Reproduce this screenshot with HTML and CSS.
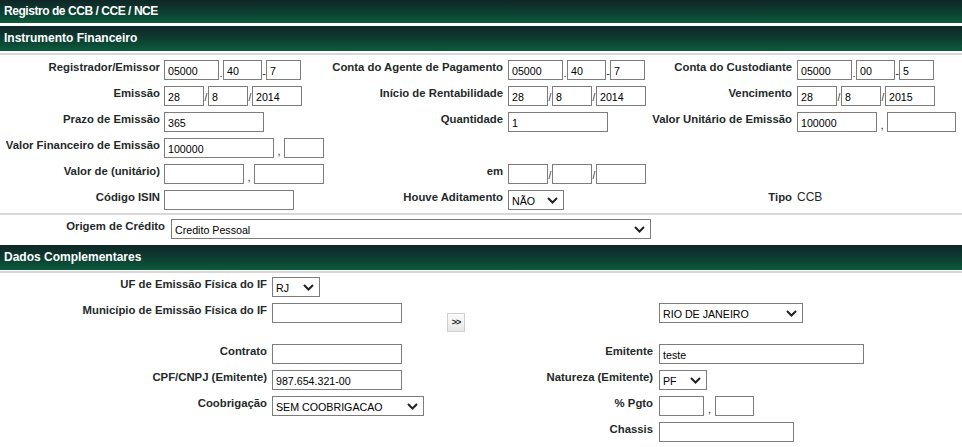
FILE: index.html
```html
<!DOCTYPE html>
<html lang="pt-BR">
<head>
<meta charset="utf-8">
<title>Registro de CCB / CCE / NCE</title>
<link rel="stylesheet" href="styles.css">
</head>
<body>
<div class="page">
  <div class="title-bar">Registro de CCB / CCE / NCE</div>
  <div class="section-bar">Instrumento Financeiro</div>

  <div class="grid-inst">
    <!-- row 1 -->
    <div class="lbl">Registrador/Emissor</div>
    <div class="fld fb"><input class="in w55" value="05000"><span class="sep">.</span><input class="in w39" value="40"><span class="sep">-</span><input class="in w35" value="7"></div>
    <div class="lbl">Conta do Agente de Pagamento</div>
    <div class="fld"><input class="in w55" value="05000"><span class="sep">.</span><input class="in w39" value="40"><span class="sep">-</span><input class="in w35" value="7"></div>
    <div class="lbl">Conta do Custodiante</div>
    <div class="fld"><input class="in w55" value="05000"><span class="sep">.</span><input class="in w39" value="00"><span class="sep">-</span><input class="in w35" value="5"></div>

    <!-- row 2 -->
    <div class="lbl">Emissão</div>
    <div class="fld fb"><input class="in w40" value="28"><span class="sep sl">/</span><input class="in w40" value="8"><span class="sep sl">/</span><input class="in w50" value="2014"></div>
    <div class="lbl">Início de Rentabilidade</div>
    <div class="fld"><input class="in w40" value="28"><span class="sep sl">/</span><input class="in w40" value="8"><span class="sep sl">/</span><input class="in w50" value="2014"></div>
    <div class="lbl">Vencimento</div>
    <div class="fld"><input class="in w40" value="28"><span class="sep sl">/</span><input class="in w40" value="8"><span class="sep sl">/</span><input class="in w50" value="2015"></div>

    <!-- row 3 -->
    <div class="lbl">Prazo de Emissão</div>
    <div class="fld fb"><input class="in w100" value="365"></div>
    <div class="lbl">Quantidade</div>
    <div class="fld"><input class="in w100" value="1"></div>
    <div class="lbl">Valor Unitário de Emissão</div>
    <div class="fld"><input class="in w80" value="100000"><span class="sep cm">,</span><input class="in w69" value=""></div>

    <!-- row 4 -->
    <div class="lbl">Valor Financeiro de Emissão</div>
    <div class="fld fb"><input class="in w110" value="100000"><span class="sep cm">,</span><input class="in w40" value=""></div>
    <div></div><div></div><div></div><div></div>

    <!-- row 5 -->
    <div class="lbl">Valor de (unitário)</div>
    <div class="fld fb"><input class="in w80" value=""><span class="sep cm">,</span><input class="in w70" value=""></div>
    <div class="lbl">em</div>
    <div class="fld"><input class="in w40" value=""><span class="sep sl">/</span><input class="in w40" value=""><span class="sep sl">/</span><input class="in w50" value=""></div>
    <div></div><div></div>

    <!-- row 6 -->
    <div class="lbl">Código ISIN</div>
    <div class="fld fb"><input class="in w130" value=""></div>
    <div class="lbl">Houve Aditamento</div>
    <div class="fld">
      <span class="sel w56"><select><option>NÃO</option><option>SIM</option></select><svg class="chev" viewBox="0 0 11 7" width="11" height="7"><path d="M1 1 L5.5 5.5 L10 1" /></svg></span>
    </div>
    <div class="lbl">Tipo</div>
    <div class="fld val">CCB</div>
  </div>

  <div class="origem-row">
    <div class="lbl origem-lbl">Origem de Crédito</div>
    <span class="sel w480"><select><option>Credito Pessoal</option></select><svg class="chev" viewBox="0 0 11 7" width="11" height="7"><path d="M1 1 L5.5 5.5 L10 1" /></svg></span>
  </div>

  <div class="section-bar">Dados Complementares</div>

  <div class="grid-comp">
    <!-- row 1 -->
    <div class="lbl">UF de Emissão Física do IF</div>
    <div class="fld"><span class="sel w48"><select><option>RJ</option></select><svg class="chev" viewBox="0 0 11 7" width="11" height="7"><path d="M1 1 L5.5 5.5 L10 1" /></svg></span></div>
    <div></div><div></div>

    <!-- row 2 -->
    <div class="lbl">Município de Emissão Física do IF</div>
    <div class="fld"><input class="in w130" value=""></div>
    <div class="btn-cell"><button class="go" type="button">&gt;&gt;</button></div>
    <div class="fld fr"><span class="sel w144"><select><option>RIO DE JANEIRO</option></select><svg class="chev" viewBox="0 0 11 7" width="11" height="7"><path d="M1 1 L5.5 5.5 L10 1" /></svg></span></div>

    <!-- row 3 -->
    <div class="lbl">Contrato</div>
    <div class="fld"><input class="in w130" value=""></div>
    <div class="lbl">Emitente</div>
    <div class="fld fr"><input class="in w205" value="teste"></div>

    <!-- row 4 -->
    <div class="lbl">CPF/CNPJ (Emitente)</div>
    <div class="fld"><input class="in w130" value="987.654.321-00"></div>
    <div class="lbl">Natureza (Emitente)</div>
    <div class="fld fr"><span class="sel w48"><select><option>PF</option><option>PJ</option></select><svg class="chev" viewBox="0 0 11 7" width="11" height="7"><path d="M1 1 L5.5 5.5 L10 1" /></svg></span></div>

    <!-- row 5 -->
    <div class="lbl">Coobrigação</div>
    <div class="fld"><span class="sel w152"><select><option>SEM COOBRIGACAO</option></select><svg class="chev" viewBox="0 0 11 7" width="11" height="7"><path d="M1 1 L5.5 5.5 L10 1" /></svg></span></div>
    <div class="lbl">% Pgto</div>
    <div class="fld fr"><input class="in w45" value=""><span class="sep cm2">,</span><input class="in w39" value=""></div>

    <!-- row 6 -->
    <div></div><div></div>
    <div class="lbl">Chassis</div>
    <div class="fld fr"><input class="in w135" value=""></div>
  </div>
</div>
</body>
</html>
```

FILE: styles.css
```css
html, body {
  margin: 0;
  padding: 0;
  background: #fff;
}

body {
  font-family: "Liberation Sans", Arial, sans-serif;
  color: #1f2a2a;
}

.page {
  width: 962px;
}

.title-bar,
.section-bar {
  background: linear-gradient(to bottom, #0f2627 0%, #0d3d31 50%, #0b5b3b 100%);
  color: #fff;
  font-weight: bold;
  padding-left: 4px;
  box-sizing: border-box;
}

.title-bar {
  height: 23px;
  line-height: 23px;
  font-size: 12px;
  letter-spacing: -0.45px;
}

.section-bar {
  height: 25px;
  line-height: 25px;
  font-size: 12px;
  margin-top: 3px;
}

/* ---------- Instrumento Financeiro ---------- */
.grid-inst {
  margin-top: 2px;
  border-top: 2px solid #d8d8d8;
  border-bottom: 2px solid #d8d8d8;
  padding: 5px 0 3px;
  display: grid;
  grid-template-columns: 160px 163px 180px 137px 152px 1fr;
  grid-auto-rows: 20px;
  row-gap: 6px;
}

.lbl {
  font-size: 11.33px;
  font-weight: bold;
  line-height: 14px;
  text-align: right;
  white-space: nowrap;
  min-width: 0;
  color: #1f2a2a;
}

.fld {
  display: flex;
  align-items: flex-start;
  padding-left: 5px;
  white-space: nowrap;
  min-width: 0;
}

.fld.fb {
  padding-left: 4px;
}

.fld.val {
  font-size: 12px;
  line-height: 14px;
  color: #1f2a2a;
}

.in {
  box-sizing: border-box;
  height: 20px;
  border: 1px solid #7d7d7d;
  border-radius: 0;
  background: #fff;
  padding: 2px 2px 0 3px;
  margin: 0;
  font-family: "Liberation Sans", Arial, sans-serif;
  font-size: 10.67px;
  color: #000;
  outline: none;
  flex: none;
}

.w35 { width: 35px; }
.w39 { width: 39px; }
.w40 { width: 40px; }
.w45 { width: 45px; }
.w48 { width: 48px; }
.w50 { width: 50px; }
.w55 { width: 55px; }
.w56 { width: 56px; }
.w69 { width: 69px; }
.w70 { width: 70px; }
.w80 { width: 80px; }
.w100 { width: 100px; }
.w110 { width: 110px; }
.w130 { width: 130px; }
.w135 { width: 135px; }
.w144 { width: 144px; }
.w152 { width: 152px; }
.w205 { width: 205px; }
.w480 { width: 480px; }

.sep {
  flex: none;
  width: 4px;
  height: 20px;
  font-size: 11px;
  line-height: 26px;
  text-align: center;
  color: #1f2a2a;
  overflow: visible;
}

.sep.sl {
  line-height: 24px;
  font-size: 10px;
}

.sep.cm {
  width: 10px;
}

.sep.cm2 {
  width: 11px;
}

/* selects */
.sel {
  position: relative;
  display: inline-block;
  height: 20px;
  flex: none;
}

.sel select {
  appearance: none;
  -webkit-appearance: none;
  box-sizing: border-box;
  width: 100%;
  height: 20px;
  border: 1px solid #7d7d7d;
  border-radius: 0;
  background: #fff;
  margin: 0;
  padding: 1px 18px 0 3px;
  font-family: "Liberation Sans", Arial, sans-serif;
  font-size: 10.67px;
  color: #000;
  outline: none;
}

.chev {
  position: absolute;
  right: 6px;
  top: 7px;
  pointer-events: none;
}

.chev path {
  fill: none;
  stroke: #222;
  stroke-width: 2;
}

/* origem */
.origem-row {
  display: flex;
  align-items: flex-start;
  padding: 4px 0 3px;
}

.origem-lbl {
  width: 165px;
  margin-right: 6px;
}

/* ---------- Dados Complementares ---------- */
.grid-comp {
  margin-top: 1px;
  border-top: 2px solid #d8d8d8;
  padding-top: 4px;
  display: grid;
  grid-template-columns: 267px 170px 216px 1fr;
  grid-template-rows: 20px 35px 20px 20px 20px 20px;
  row-gap: 6px;
}

.fld.fr {
  padding-left: 6px;
}

.btn-cell {
  padding-left: 10px;
  padding-top: 8px;
}

.go {
  box-sizing: border-box;
  width: 18px;
  height: 19px;
  padding: 0;
  margin: 0;
  border: 1px solid #d0d0d0;
  background: linear-gradient(to bottom, #fafafa, #e6e6e6);
  font-family: "Liberation Sans", Arial, sans-serif;
  font-size: 9px;
  font-weight: bold;
  color: #222;
  line-height: 17px;
  letter-spacing: -1px;
}
```
